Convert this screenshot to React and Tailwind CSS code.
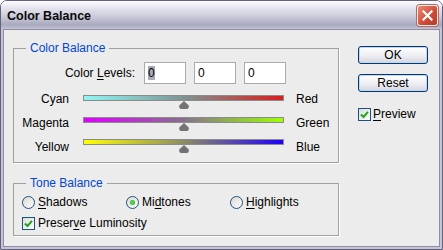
import React from "react";

const FONT = "font-['Liberation_Sans',Arial,sans-serif]";

function Thumb() {
  return (
    <svg
      width="11"
      height="8"
      viewBox="0 0 11 8"
      className="absolute left-1/2 -translate-x-1/2 top-[5px]"
    >
      <path
        d="M5.5 0 L10 4.2 C10.8 5.2 10.4 8 8 8 L3 8 C0.6 8 0.2 5.2 1 4.2 Z"
        fill="#737373"
      />
    </svg>
  );
}

function Track({ grad }) {
  return (
    <div className={`relative w-[201px] h-[6px] border border-[#8c8c8c] ${grad}`}>
      <Thumb />
    </div>
  );
}

function Checkbox() {
  return (
    <div className="w-[13px] h-[13px] border border-[#1c5180] bg-[linear-gradient(135deg,#dcdcd7,#ffffff)] flex items-center justify-center shrink-0">
      <svg width="9" height="9" viewBox="0 0 9 9">
        <path d="M1 4.5 L3.5 7 L8 1.8" stroke="#21a121" strokeWidth="2" fill="none" />
      </svg>
    </div>
  );
}

function Radio({ checked }) {
  return (
    <div className="w-[13px] h-[13px] rounded-full border border-[#1c5180] bg-[linear-gradient(135deg,#d8d8d2,#ffffff)] flex items-center justify-center shrink-0">
      {checked && (
        <div className="w-[5px] h-[5px] rounded-full bg-[radial-gradient(circle,#6ee05a,#21a121)]" />
      )}
    </div>
  );
}

function Input({ selected }) {
  return (
    <div className="w-[42px] h-[22px] border border-[#a5acb2] bg-white flex items-center px-[3px]">
      {selected ? <span className="bg-[#a8acb8] leading-[14px]">0</span> : <span>0</span>}
    </div>
  );
}

function Button({ children }) {
  return (
    <div className="w-[70px] h-[18px] rounded-[3px] border border-[#003c74] bg-[linear-gradient(to_bottom,#ffffff,#f0f0f4_50%,#d6d6e0)] shadow-[inset_0_0_0_1px_#c8d4ec] flex items-center justify-center text-black">
      {children}
    </div>
  );
}

export default function App() {
  return (
    <div className={`${FONT} text-[12px] leading-[14px] text-black w-[443px] h-[250px] bg-white`}>
      <div className="w-[443px] h-[250px] flex flex-col border border-[#626280] rounded-t-[7px] overflow-hidden">
        {/* Title bar */}
        <div className="h-[28px] shrink-0 flex items-center justify-between pl-[6px] pr-[4px] bg-[linear-gradient(to_bottom,#fdfdff_0%,#e4e4ee_25%,#cbcbda_55%,#a9a9c0_85%,#c2c2d2_100%)]">
          <span className="font-bold text-[12.5px] text-[#0a0a0a] pt-[1px]">Color Balance</span>
          <div className="w-[21px] h-[21px] rounded-[3px] border border-[#f4f0f0] bg-[linear-gradient(135deg,#ec8a74,#cf4a34_60%,#b83a26)] shadow-[0_0_0_1px_#b06a60] flex items-center justify-center">
            <svg width="11" height="11" viewBox="0 0 11 11">
              <path d="M1.5 1.5 L9.5 9.5 M9.5 1.5 L1.5 9.5" stroke="#ffffff" strokeWidth="2.2" strokeLinecap="square" />
            </svg>
          </div>
        </div>
        {/* Body */}
        <div className="flex-1 border-x-[2px] border-b-[2px] border-[#c4c4d6]">
          <div className="h-full border border-[#8e8ea6] bg-[#ececec] flex pl-[9px] pt-[11px]">
            {/* Left column */}
            <div className="flex flex-col w-[326px]">
              <fieldset className="w-[326px] border border-[#a0a0a0] shadow-[1px_1px_0_#ffffff] pb-[8px]">
                <legend className="ml-[12px] px-[4px] text-[#0046d5]">Color Balance</legend>
                <div className="flex items-center pt-[7px]">
                  <div className="w-[121px] text-right">
                    Color <u className="underline-offset-[2px]">L</u>evels:
                  </div>
                  <div className="flex ml-[9px] gap-[8px]">
                    <Input selected />
                    <Input />
                    <Input />
                  </div>
                </div>
                <div className="flex items-start">
                  <div className="w-[55px] text-right flex flex-col gap-[10px] pt-[8px]">
                    <span>Cyan</span>
                    <span>Magenta</span>
                    <span>Yellow</span>
                  </div>
                  <div className="ml-[14px] flex flex-col gap-[16px] pt-[11px]">
                    <Track grad="bg-[linear-gradient(to_right,#8ff6f6,#7e9494_50%,#dc1c1c)]" />
                    <Track grad="bg-[linear-gradient(to_right,#e000ff,#86708e_50%,#9cff00)]" />
                    <Track grad="bg-[linear-gradient(to_right,#ffff00,#8c8c62_50%,#1e00ff)]" />
                  </div>
                  <div className="ml-[12px] flex flex-col gap-[10px] pt-[8px]">
                    <span>Red</span>
                    <span>Green</span>
                    <span>Blue</span>
                  </div>
                </div>
              </fieldset>
              <fieldset className="mt-[13px] w-[326px] border border-[#a0a0a0] shadow-[1px_1px_0_#ffffff] pb-[5px]">
                <legend className="ml-[12px] px-[4px] text-[#0046d5]">Tone Balance</legend>
                <div className="flex items-center pl-[8px] pt-[5px]">
                  <div className="w-[104px] flex items-center gap-[3px]">
                    <Radio />
                    <span><u className="underline-offset-[2px]">S</u>hadows</span>
                  </div>
                  <div className="w-[104px] flex items-center gap-[3px]">
                    <Radio checked />
                    <span>Mi<u className="underline-offset-[2px]">d</u>tones</span>
                  </div>
                  <div className="flex items-center gap-[3px]">
                    <Radio />
                    <span><u className="underline-offset-[2px]">H</u>ighlights</span>
                  </div>
                </div>
                <div className="flex items-center pl-[8px] pt-[7px] gap-[3px]">
                  <Checkbox />
                  <span>Preser<u className="underline-offset-[2px]">v</u>e Luminosity</span>
                </div>
              </fieldset>
            </div>
            {/* Right column */}
            <div className="ml-[19px] pt-[5px] flex flex-col">
              <Button>OK</Button>
              <div className="mt-[10px]">
                <Button>Reset</Button>
              </div>
              <div className="mt-[15px] flex items-center gap-[2px]">
                <Checkbox />
                <span><u className="underline-offset-[2px]">P</u>review</span>
              </div>
            </div>
          </div>
        </div>
      </div>
    </div>
  );
}
